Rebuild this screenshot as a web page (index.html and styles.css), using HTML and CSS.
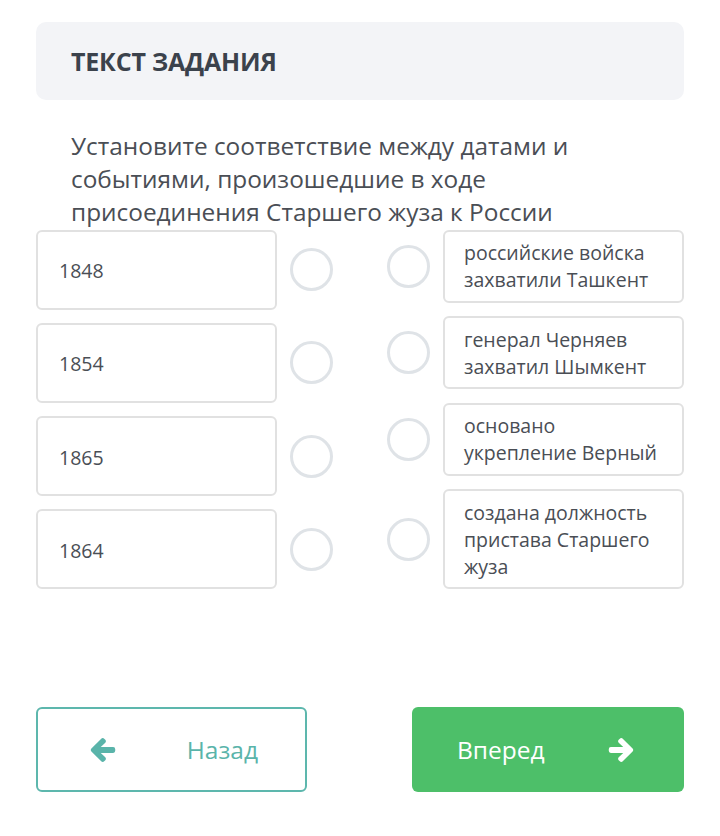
FILE: index.html
```html
<!DOCTYPE html>
<html lang="ru">
<head>
<meta charset="utf-8">
<link rel="stylesheet" href="styles.css">
</head>
<body>
<div class="page">
  <div class="task-head">ТЕКСТ ЗАДАНИЯ</div>
  <p class="task-text">Установите соответствие между датами и событиями, произошедшие в ходе присоединения Старшего жуза к России</p>
  <div class="match">
    <div class="col col-left">
      <div class="row"><div class="box box-date">1848</div><span class="dot"></span></div>
      <div class="row"><div class="box box-date">1854</div><span class="dot"></span></div>
      <div class="row"><div class="box box-date">1865</div><span class="dot"></span></div>
      <div class="row"><div class="box box-date">1864</div><span class="dot"></span></div>
    </div>
    <div class="col col-right">
      <div class="row"><span class="dot"></span><div class="box box-event">российские войска захватили Ташкент</div></div>
      <div class="row"><span class="dot"></span><div class="box box-event">генерал Черняев захватил Шымкент</div></div>
      <div class="row"><span class="dot"></span><div class="box box-event">основано укрепление Верный</div></div>
      <div class="row"><span class="dot"></span><div class="box box-event">создана должность пристава Старшего жуза</div></div>
    </div>
  </div>
  <div class="nav">
    <button class="btn btn-back">
      <svg class="arrow" viewBox="-20 -20 488 552"><path d="M257.5 445.1l-22.2 22.2c-9.4 9.4-24.6 9.4-33.9 0L7 273c-9.4-9.4-9.4-24.6 0-33.9L201.4 44.7c9.4-9.4 24.6-9.4 33.9 0l22.2 22.2c9.5 9.5 9.3 25-.4 34.3L136.6 216H424c13.3 0 24 10.7 24 24v32c0 13.3-10.7 24-24 24H136.6l120.5 114.8c9.8 9.3 10 24.8.4 34.3z"/></svg>
      <span>Назад</span>
    </button>
    <button class="btn btn-next">
      <span>Вперед</span>
      <svg class="arrow" viewBox="-20 -20 488 552"><path d="M190.5 66.9l22.2-22.2c9.4-9.4 24.6-9.4 33.9 0L441 239c9.4 9.4 9.4 24.6 0 33.9L246.6 467.3c-9.4 9.4-24.6 9.4-33.9 0l-22.2-22.2c-9.5-9.5-9.3-25 .4-34.3L311.4 296H24c-13.3 0-24-10.7-24-24v-32c0-13.3 10.7-24 24-24h287.4L190.9 101.2c-9.8-9.3-10-24.8-.4-34.3z"/></svg>
    </button>
  </div>
</div>
</body>
</html>
```

FILE: styles.css
```css
* { box-sizing: border-box; }
html, body { margin: 0; padding: 0; background: #fff; }
body { font-family: "Open Sans", "Noto Sans", sans-serif; color: #4a4e55; }
.page { padding: 22px 36px 0; width: 720px; }
.task-head {
  height: 78px;
  background: #f3f4f7;
  border-radius: 10px;
  padding: 0 35px;
  display: flex;
  align-items: center;
  font-size: 25px;
  font-weight: 700;
  color: #3b424c;
  letter-spacing: -0.2px;
}
.task-text {
  margin: 29px 0 0;
  padding: 0 60px 0 35px;
  font-size: 24.4px;
  line-height: 33px;
  color: #4a4e55;
}
.match {
  display: flex;
  justify-content: space-between;
  margin-top: 1.5px;
}
.col { display: flex; flex-direction: column; gap: 13.67px; }
.col-left { width: 297px; gap: 13.33px; }
.col-right { width: 297px; }
.row { display: flex; align-items: center; gap: 13px; }
.box {
  border: 2px solid #e1e1e1;
  border-radius: 6px;
  color: #4a4e55;
  background: #fff;
}
.box-date {
  width: 241px;
  height: 80px;
  display: flex;
  align-items: center;
  padding: 2px 0 0 21px;
  font-size: 19.5px;
}
.box-event {
  width: 241px;
  padding: 7.5px 20px 7.5px 19px;
  line-height: 27px;
  font-size: 19.5px;
}
.dot {
  flex: none;
  width: 43px;
  height: 43px;
  border-radius: 50%;
  border: 3px solid #dfe3e7;
}
.nav {
  display: flex;
  justify-content: space-between;
  margin-top: 118px;
}
.btn {
  height: 85px;
  border-radius: 6px;
  font-family: "Open Sans", "Noto Sans", sans-serif;
  font-size: 24.5px;
  display: flex;
  align-items: center;
  justify-content: space-between;
  cursor: pointer;
}
.btn-back {
  width: 271px;
  background: #fff;
  border: 2px solid #5db7ad;
  color: #5ab4aa;
  padding: 0 47px 0 52px;
  fill: #5ab4aa;
  stroke: #5ab4aa;
}
.btn-next {
  width: 272px;
  background: #4dbf69;
  border: none;
  color: #fff;
  padding: 0 50px 0 45px;
  fill: #fff;
  stroke: #fff;
}
.arrow { width: 26px; height: 28px; stroke-width: 34px; stroke-linejoin: round; }
```
